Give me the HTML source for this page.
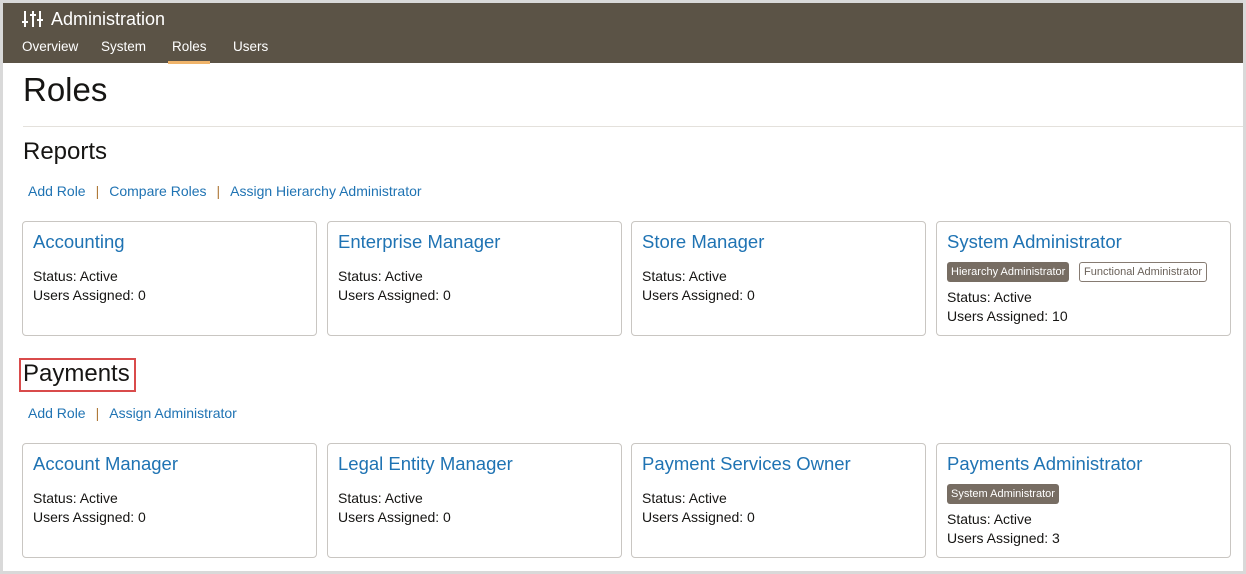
<!DOCTYPE html>
<html><head><style>
*{box-sizing:border-box;margin:0;padding:0}
body{width:1246px;height:574px;background:#d9d9d9;font-family:"Liberation Sans",sans-serif;overflow:hidden;position:relative}
.page{position:absolute;left:3px;top:3px;width:1240px;height:568px;background:#fff}
.hdr{position:absolute;left:0;top:0;width:1240px;height:60px;background:#5b5346}
.ttl{position:absolute;left:48px;top:6px;color:#fff;font-size:18px}
.ico{position:absolute;left:19px;top:7px}
.nav{position:absolute;top:36px;color:#fff;font-size:13.5px}
.ul{position:absolute;left:165px;top:58px;width:42px;height:3px;background:#f0b46a}
.h1{position:absolute;left:20px;top:68px;font-size:33px;color:#161513}
.hr{position:absolute;left:20px;top:123px;width:1220px;height:1px;background:#e4e1dc}
.h2{position:absolute;left:20px;font-size:24px;color:#161513}
.links{position:absolute;left:25px;font-size:14px;color:#1f73b3}
.links span.s{color:#b07a3a;margin:0 10px}
.card{position:absolute;width:295px;height:115px;border:1px solid #c9c6c2;border-radius:4px}
.card .t{position:absolute;left:10px;top:9px;font-size:18.5px;color:#1f73b3}
.card .l{position:absolute;left:10px;font-size:14px;color:#161513}
.b{position:absolute;top:40px;font-size:11px;height:20px;line-height:20px;padding:0 4px;border-radius:3px}
.b1{background:#776d63;color:#fff;line-height:20px}
.b2{border:1px solid #867b72;color:#6b625a;line-height:18px}
.box{position:absolute;left:16px;top:355px;width:117px;height:34px;border:2px solid #d94b4b}
</style></head><body>
<div class="page">
<div class="hdr">
<svg class="ico" width="22" height="18" viewBox="0 0 22 18" stroke="#fff" stroke-width="2" fill="none"><path d="M3 1v16M11 1v16M18 1v16M0 12h6M8 5h6M15 10h6"/></svg>
<div class="ttl">Administration</div>
<div class="nav" style="left:19px">Overview</div>
<div class="nav" style="left:98px">System</div>
<div class="nav" style="left:169px">Roles</div>
<div class="nav" style="left:230px">Users</div>
<div class="ul"></div>
</div>
<div class="h1">Roles</div>
<div class="hr"></div>
<div class="h2" style="top:135px">Reports</div>
<div class="links" style="top:180px">Add Role<span class="s">|</span>Compare Roles<span class="s">|</span>Assign Hierarchy Administrator</div>
<div class="card" style="left:19px;top:218px"><div class="t">Accounting</div><div class="l" style="top:46px">Status: Active</div><div class="l" style="top:65px">Users Assigned: 0</div></div>
<div class="card" style="left:324px;top:218px"><div class="t">Enterprise Manager</div><div class="l" style="top:46px">Status: Active</div><div class="l" style="top:65px">Users Assigned: 0</div></div>
<div class="card" style="left:628px;top:218px"><div class="t">Store Manager</div><div class="l" style="top:46px">Status: Active</div><div class="l" style="top:65px">Users Assigned: 0</div></div>
<div class="card" style="left:933px;top:218px"><div class="t">System Administrator</div><div class="b b1" style="left:10px">Hierarchy Administrator</div><div class="b b2" style="left:142px">Functional Administrator</div><div class="l" style="top:67px">Status: Active</div><div class="l" style="top:86px">Users Assigned: 10</div></div>
<div class="box"></div>
<div class="h2" style="top:357px">Payments</div>
<div class="links" style="top:402px">Add Role<span class="s">|</span>Assign Administrator</div>
<div class="card" style="left:19px;top:440px"><div class="t">Account Manager</div><div class="l" style="top:46px">Status: Active</div><div class="l" style="top:65px">Users Assigned: 0</div></div>
<div class="card" style="left:324px;top:440px"><div class="t">Legal Entity Manager</div><div class="l" style="top:46px">Status: Active</div><div class="l" style="top:65px">Users Assigned: 0</div></div>
<div class="card" style="left:628px;top:440px"><div class="t">Payment Services Owner</div><div class="l" style="top:46px">Status: Active</div><div class="l" style="top:65px">Users Assigned: 0</div></div>
<div class="card" style="left:933px;top:440px"><div class="t">Payments Administrator</div><div class="b b1" style="left:10px">System Administrator</div><div class="l" style="top:67px">Status: Active</div><div class="l" style="top:86px">Users Assigned: 3</div></div>
</div>
</body></html>
